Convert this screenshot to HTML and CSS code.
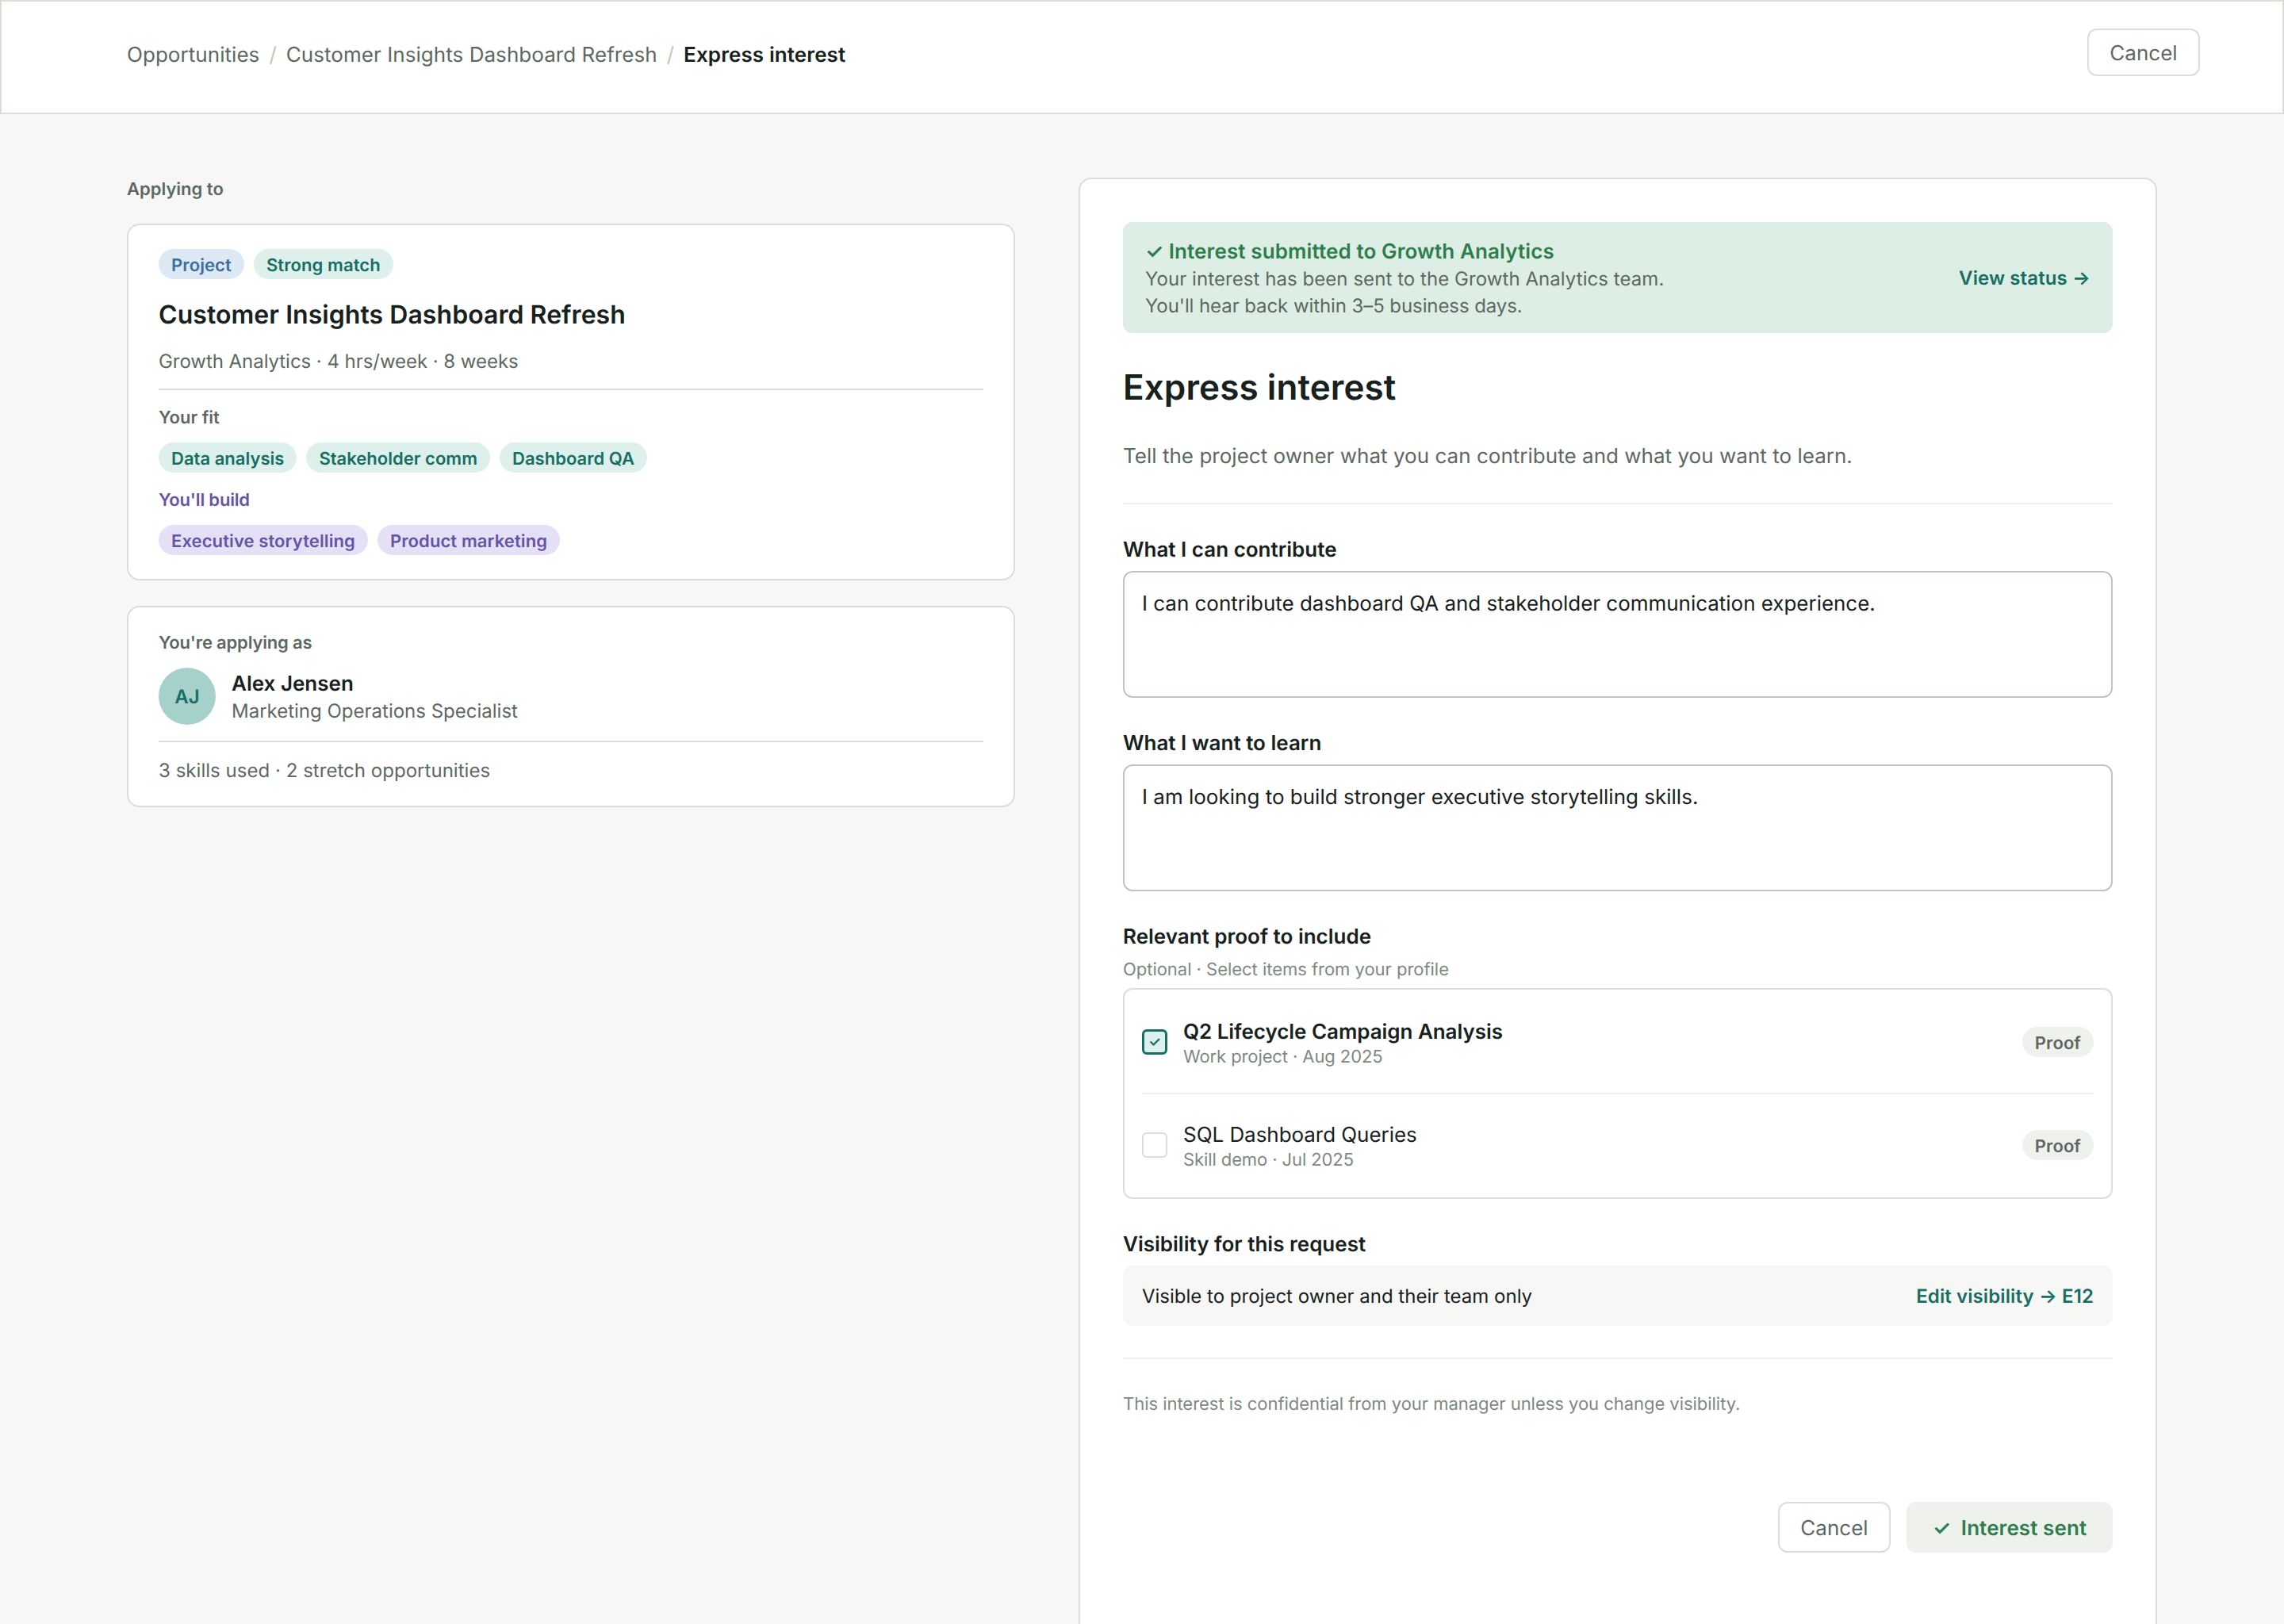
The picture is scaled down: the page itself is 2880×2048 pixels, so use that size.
FILE: index.html
```html
<!DOCTYPE html>
<html lang="en">
<head>
<meta charset="utf-8">
<title>Express interest</title>
<link rel="stylesheet" href="styles.css">
</head>
<body>
<header class="topbar">
  <nav class="crumbs">
    <span>Opportunities</span><span class="crumb-sep">/</span><span>Customer Insights Dashboard Refresh</span><span class="crumb-sep">/</span><span class="crumb-current">Express interest</span>
  </nav>
  <button class="btn btn-outline btn-top">Cancel</button>
</header>
<main class="layout">
  <aside class="sidebar">
    <div class="eyebrow">Applying to</div>
    <section class="card">
      <div class="pills"><span class="pill pill-blue">Project</span><span class="pill pill-teal">Strong match</span></div>
      <h2 class="card-title">Customer Insights Dashboard Refresh</h2>
      <p class="meta tight">Growth Analytics · 4 hrs/week · 8 weeks</p>
      <hr class="rule">
      <div class="eyebrow">Your fit</div>
      <div class="pills pills-fit"><span class="pill pill-teal">Data analysis</span><span class="pill pill-teal">Stakeholder comm</span><span class="pill pill-teal">Dashboard QA</span></div>
      <div class="eyebrow eyebrow-purple tighter">You'll build</div>
      <div class="pills"><span class="pill pill-purple">Executive storytelling</span><span class="pill pill-purple">Product marketing</span></div>
    </section>
    <section class="card">
      <div class="eyebrow tighter">You're applying as</div>
      <div class="person">
        <div class="avatar">AJ</div>
        <div class="person-text">
          <div class="person-name">Alex Jensen</div>
          <div class="meta">Marketing Operations Specialist</div>
        </div>
      </div>
      <hr class="rule">
      <p class="meta loose">3 skills used · 2 stretch opportunities</p>
    </section>
  </aside>
  <section class="panel">
    <div class="banner">
      <div class="banner-text">
        <div class="banner-title">✓ Interest submitted to Growth Analytics</div>
        <div class="banner-body"><span class="banner-line">Your interest has been sent to the Growth Analytics team.</span><br><span class="banner-line-tight">You'll hear back within 3–5 business days.</span></div>
      </div>
      <a class="link">View status →</a>
    </div>
    <h1 class="page-title">Express interest</h1>
    <p class="lead">Tell the project owner what you can contribute and what you want to learn.</p>
    <hr class="rule rule-light">
    <div class="field">
      <div class="label">What I can contribute</div>
      <div class="textbox"><span class="tight-slight">I can contribute dashboard QA and stakeholder communication experience.</span></div>
    </div>
    <div class="field">
      <div class="label">What I want to learn</div>
      <div class="textbox">I am looking to build stronger executive storytelling skills.</div>
    </div>
    <div class="field">
      <div class="label">Relevant proof to include</div>
      <div class="hint">Optional · Select items from your profile</div>
      <div class="proofs">
        <div class="proof">
          <span class="check check-on">✓</span>
          <div class="proof-text">
            <div class="proof-title proof-title-on">Q2 Lifecycle Campaign Analysis</div>
            <div class="proof-sub">Work project · Aug 2025</div>
          </div>
          <span class="pill pill-gray">Proof</span>
        </div>
        <hr class="rule rule-light">
        <div class="proof">
          <span class="check"></span>
          <div class="proof-text">
            <div class="proof-title">SQL Dashboard Queries</div>
            <div class="proof-sub">Skill demo · Jul 2025</div>
          </div>
          <span class="pill pill-gray">Proof</span>
        </div>
      </div>
    </div>
    <div class="field">
      <div class="label">Visibility for this request</div>
      <div class="visibility"><span>Visible to project owner and their team only</span><a class="link">Edit visibility → E12</a></div>
    </div>
    <hr class="rule rule-light">
    <p class="note">This interest is confidential from your manager unless you change visibility.</p>
    <div class="actions">
      <button class="btn btn-outline">Cancel</button>
      <button class="btn btn-sent"><span>✓</span><span>Interest sent</span></button>
    </div>
  </section>
</main>
</body>
</html>
```
FILE: styles.css
```css
* { box-sizing: border-box; margin: 0; padding: 0; }

body {
  height: 2048px;
  overflow: hidden;
  background: #f7f7f5;
  color: #17211d;
  font-family: Inter, "Liberation Sans", sans-serif;
  font-size: 26px;
  line-height: 32px;
  text-rendering: geometricPrecision;
}

.topbar {
  display: flex;
  justify-content: space-between;
  align-items: flex-start;
  height: 144px;
  padding: 34px 104px 0 158px;
  background: #fff;
  border: 2px solid #d9dfd7;
}
.crumbs { display: flex; gap: 12px; padding-top: 18px; color: #5c6861; letter-spacing: 0.05px; }
.crumb-sep { color: #bfc7ba; }
.crumb-current { color: #17211d; font-weight: 600; letter-spacing: 0.1px; }

.btn {
  display: flex;
  align-items: center;
  justify-content: center;
  height: 64px;
  padding-top: 3px;
  border: 0;
  border-radius: 12px;
  font: 400 26px/32px Inter, "Liberation Sans", sans-serif;
  text-rendering: geometricPrecision;
}
.btn-outline {
  width: 142px;
  background: #fff;
  border: 2px solid #d9dfd7;
  color: #5c6861;
}
.btn-top { height: 60px; }
.btn-sent {
  gap: 13px;
  width: 260px;
  background: #eff1ec;
  color: #2e7d4f;
  font-weight: 600;
  letter-spacing: 0.08px;
}

.layout {
  display: flex;
  align-items: flex-start;
  gap: 80px;
  padding: 80px 160px 0;
}
.sidebar { display: flex; flex-direction: column; gap: 32px; width: 1120px; }

/* Optical centring: text sits slightly lower in its line */
.card-title, .meta, .page-title {
  padding-top: 1px;
  margin-bottom: -1px;
}
.eyebrow, .person-name, .lead, .label, .hint, .note, .banner-title, .proof-title, .proof-sub {
  padding-top: 2px;
  margin-bottom: -2px;
}

.eyebrow { color: #5c6861; font-size: 22px; font-weight: 600; line-height: 26px; }
.eyebrow-purple { color: #6554a6; }

.card {
  display: flex;
  flex-direction: column;
  gap: 20px;
  padding: 30px 38px;
  background: #fff;
  border: 2px solid #d9dfd7;
  border-radius: 16px;
}
.card-title { font-size: 32px; font-weight: 600; line-height: 48px; letter-spacing: 0.05px; }
.meta { color: #5c6861; font-size: 24px; line-height: 30px; }
.rule { height: 2px; border: 0; background: #d9dfd7; }
.rule-light { background: #eff1ec; }

.tight-slight { letter-spacing: -0.03px; }
.tight { letter-spacing: -0.05px; }
.tighter { letter-spacing: -0.18px; }
.loose { letter-spacing: 0.03px; }

.pills { display: flex; gap: 12px; letter-spacing: 0.1px; }
.pills-fit { letter-spacing: 0.02px; }
.pill {
  height: 38px;
  padding: 8px 16px 4px;
  border-radius: 19px;
  font-size: 22px;
  font-weight: 600;
  line-height: 26px;
}
.pill-blue { background: #dce9f4; color: #3f6e9e; }
.pill-teal { background: #ddf0eb; color: #176e64; }
.pill-purple { background: #e4e0f5; color: #6554a6; }
.pill-gray { background: #eff1ec; color: #5c6861; letter-spacing: 0.07px; }

.person { display: flex; align-items: center; gap: 20px; }
.avatar {
  width: 72px;
  height: 72px;
  padding-top: 1px;
  border-radius: 50%;
  background: #a6d1ca;
  color: #176e64;
  font-size: 24px;
  font-weight: 600;
  line-height: 72px;
  text-align: center;
}
.person-text { display: flex; flex-direction: column; gap: 4px; }
.person-name { font-weight: 600; }

.panel {
  display: flex;
  flex-direction: column;
  gap: 40px;
  width: 1360px;
  height: 1900px;
  padding: 54px;
  background: #fff;
  border: 2px solid #d9dfd7;
  border-radius: 16px;
}
.banner {
  display: flex;
  justify-content: space-between;
  align-items: center;
  height: 140px;
  padding: 2px 28px 0;
  background: #ddeee4;
  border-radius: 12px;
}
.banner-text { display: flex; flex-direction: column; gap: 2px; }
.banner-title { color: #2e7d4f; font-weight: 600; letter-spacing: 0.11px; }
.banner-body { padding-top: 1px; margin-bottom: -1px; color: #5c6861; font-size: 24px; line-height: 34px; }
.banner-line { letter-spacing: 0.06px; }
.banner-line-tight { letter-spacing: -0.085px; }
.link { color: #176e64; font-size: 24px; font-weight: 600; line-height: 30px; letter-spacing: 0.1px; }

.page-title { font-size: 44px; font-weight: 600; line-height: 54px; letter-spacing: 0.1px; }
.lead { color: #5c6861; line-height: 40px; letter-spacing: 0.025px; }

.field { display: flex; flex-direction: column; gap: 12px; }
.label { font-weight: 600; }
.hint { color: #7d8880; font-size: 22px; line-height: 26px; letter-spacing: -0.03px; }
.textbox {
  height: 160px;
  padding: 24px 22px 20px;
  background: #fff;
  border: 2px solid #bfc7ba;
  border-radius: 12px;
}

.proofs {
  padding: 2px 22px;
  border: 2px solid #d9dfd7;
  border-radius: 12px;
}
.proof { display: flex; align-items: center; gap: 20px; height: 128px; }
.check {
  width: 32px;
  height: 32px;
  border: 2px solid #d9dfd7;
  border-radius: 6px;
  background: #fff;
}
.check-on {
  border: 3px solid #176e64;
  background: #ddf0eb;
  color: #176e64;
  font-size: 18px;
  font-weight: 600;
  line-height: 27px;
  text-align: center;
}
.proof-text { display: flex; flex-direction: column; flex: 1; gap: 2px; letter-spacing: -0.05px; }
.proof-title-on { font-weight: 600; }
.proof-sub { color: #7d8880; font-size: 22px; line-height: 26px; letter-spacing: -0.1px; }

.visibility {
  display: flex;
  justify-content: space-between;
  align-items: center;
  height: 76px;
  padding: 1px 24px 0;
  background: #f7f7f5;
  border-radius: 12px;
  font-size: 24px;
  line-height: 30px;
}
.note { color: #7d8880; font-size: 22px; line-height: 30px; letter-spacing: -0.035px; }
.actions { display: flex; justify-content: flex-end; gap: 20px; margin-top: 70px; }
```
